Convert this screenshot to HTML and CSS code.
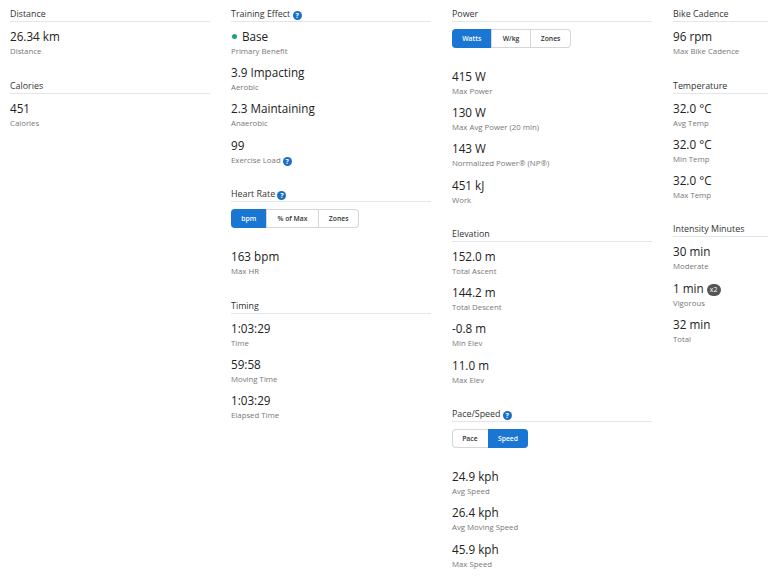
FILE: index.html
```html
<!DOCTYPE html>
<html lang="en">
<head>
<meta charset="utf-8">
<title>Activity stats</title>
<link rel="stylesheet" href="styles.css">
</head>
<body>
<main class="page">
  <div class="col">
    <section class="sec">
      <h3 class="title">Distance</h3>
      <div class="item"><div class="val">26.34 km</div><div class="lab">Distance</div></div>
    </section>
    <section class="sec">
      <h3 class="title">Calories</h3>
      <div class="item"><div class="val">451</div><div class="lab">Calories</div></div>
    </section>
  </div>
  <div class="col">
    <section class="sec">
      <h3 class="title">Training Effect <span class="help">?</span></h3>
      <div class="item"><div class="val"><span class="dot"></span>Base</div><div class="lab">Primary Benefit</div></div>
      <div class="item"><div class="val">3.9 Impacting</div><div class="lab">Aerobic</div></div>
      <div class="item"><div class="val">2.3 Maintaining</div><div class="lab">Anaerobic</div></div>
      <div class="item"><div class="val">99</div><div class="lab">Exercise Load <span class="help">?</span></div></div>
    </section>
    <section class="sec">
      <h3 class="title">Heart Rate <span class="help">?</span></h3>
      <div class="toggle"><span class="opt on">bpm</span><span class="opt">% of Max</span><span class="opt">Zones</span></div>
      <div class="item"><div class="val">163 bpm</div><div class="lab">Max HR</div></div>
    </section>
    <section class="sec">
      <h3 class="title">Timing</h3>
      <div class="item"><div class="val">1:03:29</div><div class="lab">Time</div></div>
      <div class="item"><div class="val">59:58</div><div class="lab">Moving Time</div></div>
      <div class="item"><div class="val">1:03:29</div><div class="lab">Elapsed Time</div></div>
    </section>
  </div>
  <div class="col">
    <section class="sec">
      <h3 class="title">Power</h3>
      <div class="toggle"><span class="opt on">Watts</span><span class="opt">W/kg</span><span class="opt">Zones</span></div>
      <div class="item"><div class="val">415 W</div><div class="lab">Max Power</div></div>
      <div class="item"><div class="val">130 W</div><div class="lab">Max Avg Power (20 min)</div></div>
      <div class="item"><div class="val">143 W</div><div class="lab">Normalized Power® (NP®)</div></div>
      <div class="item"><div class="val">451 kJ</div><div class="lab">Work</div></div>
    </section>
    <section class="sec">
      <h3 class="title">Elevation</h3>
      <div class="item"><div class="val">152.0 m</div><div class="lab">Total Ascent</div></div>
      <div class="item"><div class="val">144.2 m</div><div class="lab">Total Descent</div></div>
      <div class="item"><div class="val">-0.8 m</div><div class="lab">Min Elev</div></div>
      <div class="item"><div class="val">11.0 m</div><div class="lab">Max Elev</div></div>
    </section>
    <section class="sec">
      <h3 class="title">Pace/Speed <span class="help">?</span></h3>
      <div class="toggle"><span class="opt">Pace</span><span class="opt on">Speed</span></div>
      <div class="item"><div class="val">24.9 kph</div><div class="lab">Avg Speed</div></div>
      <div class="item"><div class="val">26.4 kph</div><div class="lab">Avg Moving Speed</div></div>
      <div class="item"><div class="val">45.9 kph</div><div class="lab">Max Speed</div></div>
    </section>
  </div>
  <div class="col">
    <section class="sec">
      <h3 class="title">Bike Cadence</h3>
      <div class="item"><div class="val">96 rpm</div><div class="lab">Max Bike Cadence</div></div>
    </section>
    <section class="sec">
      <h3 class="title">Temperature</h3>
      <div class="item"><div class="val">32.0 °C</div><div class="lab">Avg Temp</div></div>
      <div class="item"><div class="val">32.0 °C</div><div class="lab">Min Temp</div></div>
      <div class="item"><div class="val">32.0 °C</div><div class="lab">Max Temp</div></div>
    </section>
    <section class="sec">
      <h3 class="title">Intensity Minutes</h3>
      <div class="item"><div class="val">30 min</div><div class="lab">Moderate</div></div>
      <div class="item"><div class="val">1 min <span class="badge">x2</span></div><div class="lab">Vigorous</div></div>
      <div class="item"><div class="val">32 min</div><div class="lab">Total</div></div>
    </section>
  </div>
</main>
</body>
</html>
```
FILE: styles.css
```css
html, body { margin: 0; padding: 0; background: #fff; overflow: hidden; }
body { width: 768px; height: 577px; font-family: "Open Sans", "Liberation Sans", sans-serif; overflow: hidden; }
.page { display: grid; grid-template-columns: repeat(3, 200px) 95px; column-gap: 21px; padding: 7px 0 0 10px; width: 758px; }
.sec { margin-bottom: 22.5px; }
.sec:last-child { margin-bottom: 0; }
.title { margin: 0 0 4px; height: 14px; line-height: 14px; font-size: 8.9px; font-weight: 400; color: #333; border-bottom: 1px solid #e3e5e7; }
.item { margin-bottom: 6.2px; }
.val { height: 20px; line-height: 20px; font-size: 11.7px; color: #222; }
.lab { height: 10px; line-height: 10px; font-size: 7.8px; color: #777; }
.help { display: inline-block; width: 9px; height: 9px; border-radius: 50%; background: #1a6fc4; color: #fff; font-size: 7px; line-height: 9px; text-align: center; font-weight: 700; vertical-align: -1px; }
.dot { display: inline-block; width: 5px; height: 5px; border-radius: 50%; background: #1aa37a; margin: 0 5px 2px 1px; }
.badge { display: inline-block; width: 14px; height: 12px; line-height: 12px; border-radius: 6px; background: #555; color: #fff; font-size: 7px; text-align: center; vertical-align: 1px; }
.toggle { display: flex; width: fit-content; height: 19px; margin: 6.5px 0 18.5px; border-radius: 4px; box-shadow: inset 0 0 0 1px #d4d6d8; font-size: 6.8px; font-weight: 600; color: #333; }
.opt { line-height: 19px; padding: 0 10.2px; border-left: 1px solid #d4d6d8; }
.opt:first-child { border-left: 0; border-radius: 4px 0 0 4px; }
.opt:last-child { border-radius: 0 4px 4px 0; }
.opt.on { background: #1976d2; color: #fff; border-left: 0; }
```
